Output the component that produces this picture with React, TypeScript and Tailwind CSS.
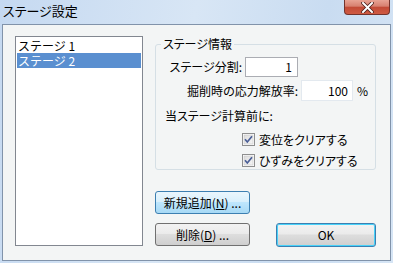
import type { ReactNode } from "react";

const FONT = "font-['Meiryo_UI','Noto_Sans_CJK_JP',sans-serif] [font-feature-settings:'palt']";

function CheckBox({ label }: { label: string }) {
  return (
    <div className="flex items-center gap-[4px] h-[13px]">
      <svg width="13" height="13" viewBox="0 0 13 13">
        <defs>
          <linearGradient id="cbg" x1="0" y1="0" x2="1" y2="1">
            <stop offset="0" stopColor="#dcdcdc" />
            <stop offset="1" stopColor="#f6f6f6" />
          </linearGradient>
        </defs>
        <rect x="0.5" y="0.5" width="12" height="12" fill="#fff" stroke="#8e8f8f" />
        <rect x="2" y="2" width="9" height="9" fill="url(#cbg)" stroke="#c6c6c6" strokeWidth="0.6" />
        <path d="M3 6.3 L5.3 9 L10 3.2" fill="none" stroke="#4a5f97" strokeWidth="1.7" />
      </svg>
      <span className="text-[12px] leading-[14px] text-black">{label}</span>
    </div>
  );
}

function Button({
  children,
  variant,
  className,
}: {
  children: ReactNode;
  variant: "hover" | "normal" | "default";
  className: string;
}) {
  const styles = {
    hover:
      "border-[#3c7fb1] bg-[linear-gradient(#eaf6fd_0%,#d9f0fc_45%,#bee6fd_50%,#a7d9f5_100%)]",
    normal:
      "border-[#707070] bg-[linear-gradient(#f2f2f2_0%,#ebebeb_45%,#dddddd_50%,#cfcfcf_100%)]",
    default:
      "border-[#3c7fb1] bg-[linear-gradient(#f2f2f2_0%,#ebebeb_45%,#dddddd_50%,#cfcfcf_100%)] shadow-[inset_0_0_0_1px_#48d2f9]",
  }[variant];
  return (
    <div
      className={`flex items-center justify-center whitespace-nowrap rounded-[3px] border text-[12px] leading-[14px] text-black ${styles} ${className}`}
    >
      {children}
    </div>
  );
}

export default function App() {
  return (
    <div
      className={`${FONT} w-[393px] h-[263px] overflow-hidden flex flex-col bg-[linear-gradient(100deg,#c5d9f1_0%,#d8e6f5_45%,#c9dcf1_75%,#d6e5f5_100%)]`}
    >
      {/* title bar */}
      <div className="h-[24px] flex items-start shrink-0">
        <div className="pl-[3px] pt-[3px] text-[13px] leading-[16px] text-black">ステージ設定</div>
        <div className="ml-auto mr-[3px] w-[46px] h-[15px] rounded-b-[4px] border border-t-0 border-[#73332c] bg-[linear-gradient(#e8a394_0%,#d7806f_45%,#c24a36_50%,#cf5a42_100%)] flex items-center justify-center">
          <svg width="13" height="11" viewBox="0 0 13 11">
            <path
              d="M2 1 L11 10 M11 1 L2 10"
              stroke="#4b1f1a"
              strokeWidth="3.6"
              strokeLinecap="square"
            />
            <path
              d="M2 1 L11 10 M11 1 L2 10"
              stroke="#ffffff"
              strokeWidth="2"
              strokeLinecap="square"
            />
          </svg>
        </div>
      </div>

      {/* client area */}
      <div className="mx-[2px] mb-[2px] h-[237px] border border-[#8193aa] bg-[#f3f5f5] flex pt-[11px] pl-[12px]">
        {/* list */}
        <div className="w-[128px] h-[210px] border border-[#828790] bg-white p-[1px] text-[12px]">
          <div className="h-[15px] pl-[1px] leading-[15px] text-black [font-feature-settings:normal]">ステージ 1</div>
          <div className="h-[15px] pl-[1px] leading-[15px] bg-[#5a8fd0] text-white [font-feature-settings:normal]">ステージ 2</div>
        </div>

        {/* right column */}
        <div className="ml-[12px] w-[221px] flex flex-col">
          <div className="relative mt-[8px] h-[126px] rounded-[3px] border border-[#d5dfe5] text-[12px] leading-[14px] text-black">
            <div className="absolute left-[5px] top-[-8px] px-[2px] bg-[#f3f5f5]">ステージ情報</div>

            <div className="flex items-center mt-[12px]">
              <div className="w-[86px] text-right">ステージ分割:</div>
              <div className="ml-[3px] w-[53px] h-[20px] border border-[#abadb3] bg-white text-right pr-[5px] leading-[18px]">
                1
              </div>
            </div>

            <div className="flex items-center mt-[3px]">
              <div className="w-[142px] text-right">掘削時の応力解放率:</div>
              <div className="ml-[3px] w-[52px] h-[21px] border border-[#e3e9ef] bg-white text-right pr-[4px] leading-[19px]">
                100
              </div>
              <div className="ml-[4px]">%</div>
            </div>

            <div className="mt-[8px] ml-[9px]">当ステージ計算前に:</div>

            <div className="flex flex-col gap-[8px] mt-[10px] ml-[86px]">
              <CheckBox label="変位をクリアする" />
              <CheckBox label="ひずみをクリアする" />
            </div>
          </div>

          <Button variant="hover" className="mt-[21px] w-[95px] h-[23px]">
            新規追加(<span className="underline">N</span>) ...
          </Button>

          <div className="mt-[9px] flex items-start">
            <Button variant="normal" className="w-[95px] h-[23px]">
              削除(<span className="underline">D</span>) ...
            </Button>
            <Button variant="default" className="ml-[26px] w-[100px] h-[24px]">
              OK
            </Button>
          </div>
        </div>
      </div>
    </div>
  );
}
